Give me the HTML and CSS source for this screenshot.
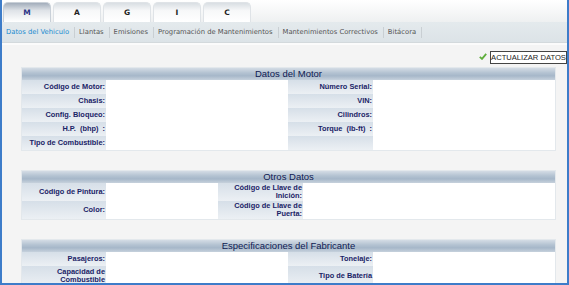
FILE: index.html
```html
<!DOCTYPE html>
<html lang="es">
<head>
  <meta charset="UTF-8">
  <title>Datos del Vehiculo</title>
  <link rel="stylesheet" href="styles.css">
</head>
<body>
  <div class="frame">

    <div class="tabs">
      <div class="tab active">M</div>
      <div class="tab">A</div>
      <div class="tab">G</div>
      <div class="tab">I</div>
      <div class="tab">C</div>
    </div>

    <div class="nav">
      <a class="current">Datos del Vehiculo</a><span class="sep"></span>
      <a>Llantas</a><span class="sep"></span>
      <a>Emisiones</a><span class="sep"></span>
      <a>Programación de Mantenimientos</a><span class="sep"></span>
      <a>Mantenimientos Correctivos</a><span class="sep"></span>
      <a>Bitácora</a><span class="sep"></span>
    </div>

    <div class="content">
      <div class="toolbar">
        <svg class="check" width="8" height="7" viewBox="0 0 8 7">
          <path d="M0.8 3.8 L3 5.9 L7.2 0.9" fill="none" stroke="#5fae3b" stroke-width="1.8"/>
        </svg>
        <button class="btn-update">ACTUALIZAR DATOS</button>
      </div>

      <div class="section">
        <div class="section-title">Datos del Motor</div>
        <div class="grid motor">
          <div class="lbl">Código de Motor:</div><div class="val"></div>
          <div class="lbl">Número Serial:</div><div class="val"></div>
          <div class="lbl">Chasis:</div><div class="val"></div>
          <div class="lbl">VIN:</div><div class="val"></div>
          <div class="lbl">Config. Bloqueo:</div><div class="val"></div>
          <div class="lbl">Cilindros:</div><div class="val"></div>
          <div class="lbl">H.P.&nbsp; (bhp) &nbsp;:</div><div class="val"></div>
          <div class="lbl">Torque&nbsp; (lb-ft) &nbsp;:</div><div class="val"></div>
          <div class="lbl">Tipo de Combustible:</div><div class="val"></div>
          <div class="lbl"></div><div class="val"></div>
        </div>
      </div>

      <div class="section">
        <div class="section-title">Otros Datos</div>
        <div class="grid otros">
          <div class="lbl">Código de Pintura:</div><div class="val"></div>
          <div class="lbl">Código de Llave de Inición:</div><div class="val"></div>
          <div class="lbl">Color:</div><div class="val"></div>
          <div class="lbl">Código de Llave de Puerta:</div><div class="val"></div>
        </div>
      </div>

      <div class="section">
        <div class="section-title">Especificaciones del Fabricante</div>
        <div class="grid fabricante">
          <div class="lbl">Pasajeros:</div><div class="val"></div>
          <div class="lbl">Tonelaje:</div><div class="val"></div>
          <div class="lbl">Capacidad de Combustible</div><div class="val"></div>
          <div class="lbl">Tipo de Batería</div><div class="val"></div>
        </div>
      </div>
    </div>

  </div>
</body>
</html>
```

FILE: styles.css
```css
body {
  margin: 0;
  padding: 0;
  background: #ffffff;
  font-family: 'Liberation Sans', Arial, sans-serif;
}

.frame {
  width: 569px;
  height: 285px;
  box-sizing: border-box;
  border: 2px solid #3d7cc9;
  border-top: none;
  overflow: hidden;
  background: #f4f4f4;
}

/* tabs */
.tabs {
  height: 22px;
  display: flex;
  align-items: flex-end;
  gap: 2px;
  padding-left: 1px;
  background: linear-gradient(#ffffff, #eef0f1);
}

.tab {
  width: 48px;
  height: 20px;
  box-sizing: border-box;
  border: 1px solid #dfe3e7;
  border-bottom: none;
  border-radius: 5px 5px 0 0;
  background: linear-gradient(#d9dee3, #f7f8f9 40%, #ffffff);
  font-family: 'DejaVu Sans', sans-serif;
  font-weight: bold;
  font-size: 7.5px;
  color: #222;
  text-align: center;
  line-height: 19px;
}

.tab.active {
  background: linear-gradient(#a2adbb, #dfe3e8 40%, #ffffff);
  border-color: #c9d0d8;
  color: #2b3486;
}

/* sub navigation */
.nav {
  height: 21px;
  box-sizing: border-box;
  display: flex;
  align-items: center;
  padding-left: 4px;
  background: linear-gradient(#e4eaed, #dce3e7);
  border-bottom: 1px solid #d3d9dc;
  font-family: 'DejaVu Sans', sans-serif;
  font-size: 6.8px;
  color: #555;
}

.nav a.current {
  color: #1b8bd0;
}

.nav .sep {
  width: 1px;
  height: 11px;
  margin: 0 4px 0 5px;
  background: #c9cfd3;
}

/* content */
.content {
  border-top: 2px solid #fbfbfb;
  padding: 5px 0 0 19px;
}

.toolbar {
  height: 14px;
  display: flex;
  align-items: center;
  justify-content: flex-end;
  gap: 3px;
  margin-bottom: 3px;
}

.check {
  margin-bottom: 1px;
}

.btn-update {
  height: 13px;
  width: 77px;
  padding: 0;
  border: 1px solid #444;
  background: #fff;
  font-family: 'Liberation Sans', Arial, sans-serif;
  font-size: 7.6px;
  color: #222;
  line-height: 11px;
}

.section {
  width: 535px;
  box-sizing: border-box;
  border: 1px solid #e3e8ec;
  background: #fff;
  margin-bottom: 19px;
}

.section-title {
  height: 12px;
  background: linear-gradient(#d4dce5, #b4c3d2 40%, #a6b7c9 65%, #c6d1dc);
  text-align: center;
  font-size: 9.5px;
  line-height: 12px;
  color: #0f1a52;
}

.grid {
  display: grid;
}

.grid.motor {
  grid-template-columns: 84px 182px 85px 1fr;
  grid-auto-rows: 14px;
}

.grid.otros {
  grid-template-columns: 84px 112px 85px 1fr;
  grid-auto-rows: 18px;
}

.grid.fabricante {
  grid-template-columns: 84px 182px 85px 1fr;
  grid-template-rows: 14px 20px;
}

.lbl {
  display: flex;
  align-items: center;
  justify-content: flex-end;
  text-align: right;
  padding-right: 1px;
  background: linear-gradient(#d6dfe8, #ecf0f4);
  font-weight: bold;
  font-size: 7.4px;
  line-height: 8px;
  color: #1a2366;
}

.val {
  background: #fff;
}
```
